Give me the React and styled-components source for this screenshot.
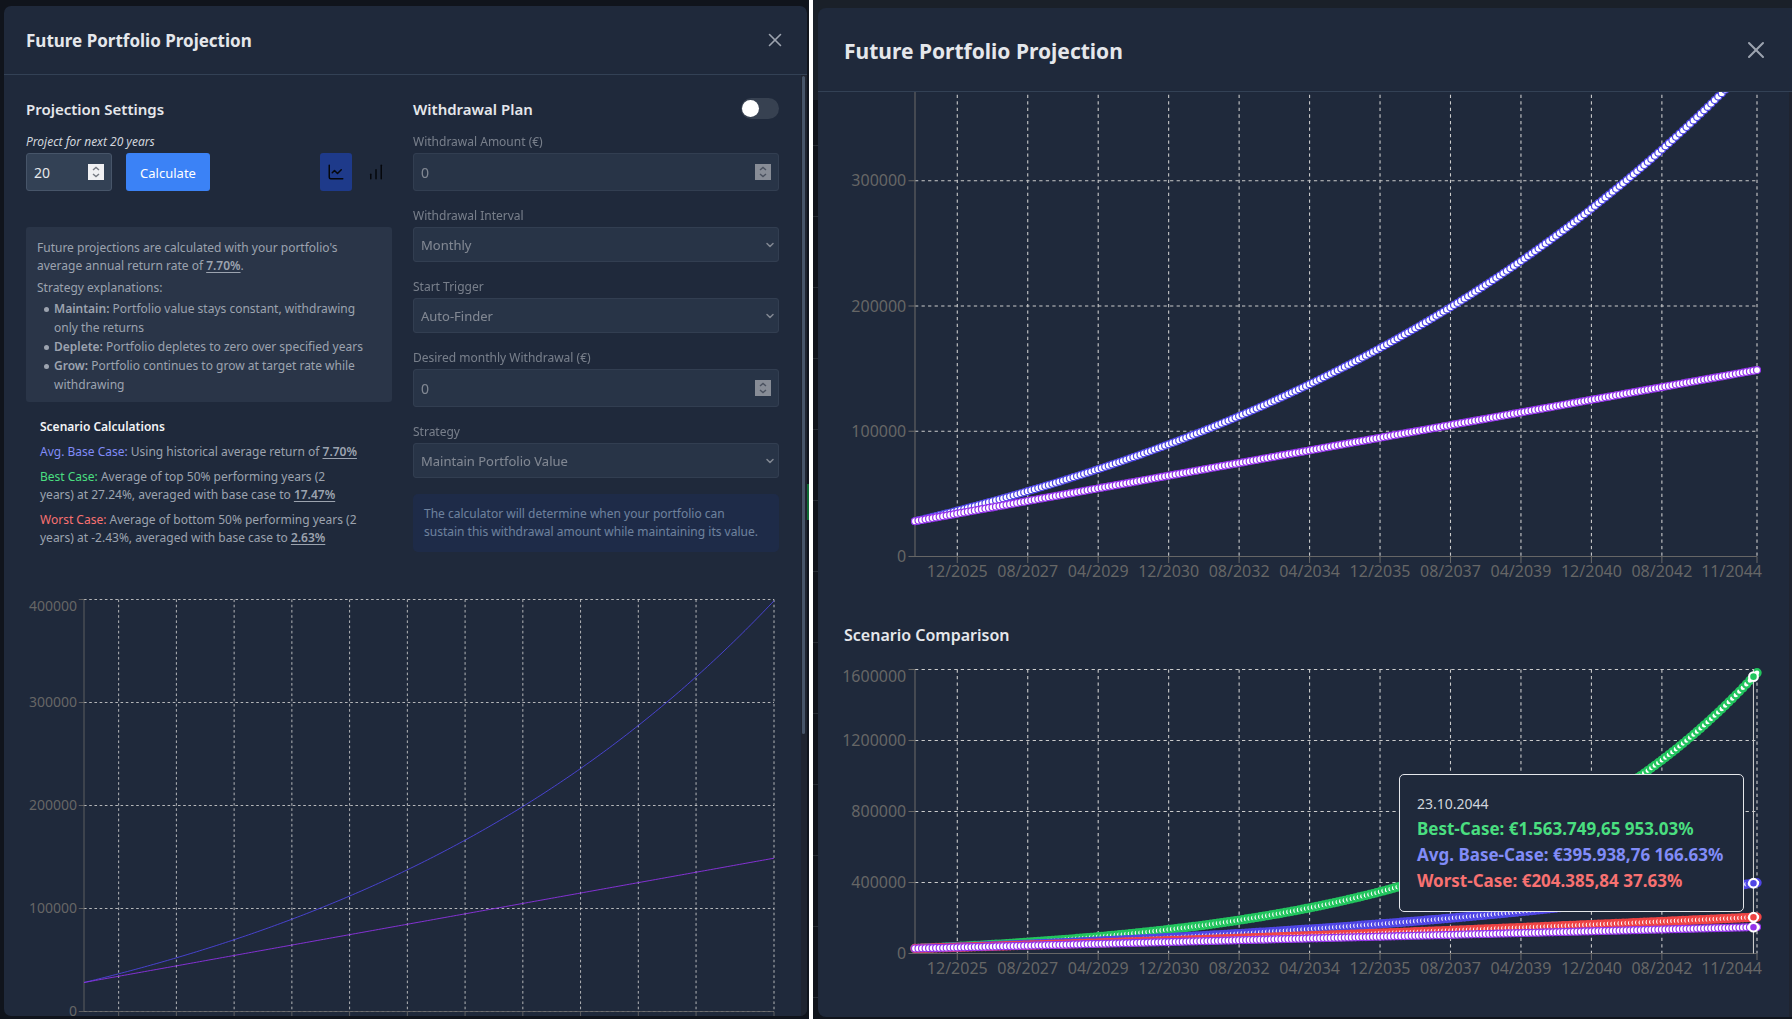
import React, { useId, useLayoutEffect, useRef, useState } from "react";
import styled, { createGlobalStyle } from "styled-components";
import { X, ChartLine, ChartNoAxesColumnIncreasing, ChevronDown } from "lucide-react";

const GlobalStyle = createGlobalStyle`
  * { box-sizing: border-box; }
  body {
    margin: 0;
    background: #ffffff;
    color: #e5e7eb;
    font-family: "Noto Sans", "Open Sans", sans-serif;
  }
  h2, h3, h4, p, ul { margin: 0; padding: 0; }
  button, input, select { font: inherit; }
`;

/* ---------- data ---------- */

const MONTHS = 240;
const START_VALUE = 28150;
const MONTHLY_PAYMENT = 505;

function project(annualRate) {
  const rate = Math.pow(1 + annualRate, 1 / 12) - 1;
  const values = [];
  let value = START_VALUE;
  for (let month = 0; month < MONTHS; month += 1) {
    values.push(value);
    value = value * (1 + rate) + MONTHLY_PAYMENT;
  }
  return values;
}

const invested = { name: "Invested", color: "#9333ea", width: 1, values: project(0) };
const base = { name: "Base", color: "#4f46e5", width: 1, values: project(0.077) };
const baseWide = { ...base, width: 2 };
const best = { name: "Best", color: "#22c55e", width: 2, values: project(0.1747) };
const worst = { name: "Worst", color: "#ef4444", width: 2, values: project(0.0263) };

const portfolioTicks = [0, 100000, 200000, 300000, 400000];
const scenarioTicks = [0, 400000, 800000, 1200000, 1600000];
const dateTicks = [
  [12, "12/2025"],
  [32, "08/2027"],
  [52, "04/2029"],
  [72, "12/2030"],
  [92, "08/2032"],
  [112, "04/2034"],
  [132, "12/2035"],
  [152, "08/2037"],
  [172, "04/2039"],
  [192, "12/2040"],
  [212, "08/2042"],
  [239, "11/2044"],
];

/* ---------- page and dialogs ---------- */

const Page = styled.main`
  display: grid;
  grid-template-columns: 809fr 979fr;
  gap: 4px;
  height: 100vh;
  overflow: hidden;
`;

const Screen = styled.section`
  display: grid;
  min-width: 0;
  min-height: 0;
  overflow: hidden;
  padding: ${(p) => p.$inset};
  background: ${(p) => p.$backdrop};
`;

const Dialog = styled.div`
  display: flex;
  flex-direction: column;
  min-width: 0;
  min-height: 0;
  overflow: hidden;
  border-radius: ${(p) => p.$radius};
  background: #1f293b;
`;

const DialogHeader = styled.header`
  flex: none;
  display: flex;
  align-items: center;
  justify-content: space-between;
  height: ${(p) => (p.$large ? 84 : 69)}px;
  padding: ${(p) => (p.$large ? "0 22px 0 26px" : "0 21px 0 22px")};
  border-bottom: 1px solid #334155;
`;

const DialogTitle = styled.h2`
  padding-top: 2px;
  font-size: ${(p) => (p.$large ? 21 : 17)}px;
  line-height: 28px;
  font-weight: 700;
`;

const CloseButton = styled.button`
  display: flex;
  padding: 0;
  border: 0;
  background: none;
  color: #9ca3af;
  cursor: pointer;
`;

const DialogBody = styled.div`
  flex: 1;
  display: flex;
  min-height: 0;
`;

const Content = styled.div`
  flex: 1;
  display: flex;
  flex-direction: column;
  justify-content: ${(p) => (p.$atEnd ? "flex-end" : "flex-start")};
  min-width: 0;
  overflow: hidden;
  padding: ${(p) => (p.$atEnd ? "0 27px 27px 26px" : "22px 22px 0")};
`;

const ScrollTrack = styled.div`
  flex: none;
  width: ${(p) => p.$width}px;
  padding: 1px 2px 0 1px;
  background: #1f2430;
`;

const ScrollThumb = styled.div`
  height: 70%;
  border-radius: 2px;
  background: #475569;
`;

/* ---------- settings ---------- */

const Columns = styled.div`
  flex: none;
  display: grid;
  grid-template-columns: 1fr 1fr;
  gap: 21px;
  margin-bottom: 42px;
`;

const Column = styled.div`
  display: flex;
  flex-direction: column;
  min-width: 0;
`;

const ColumnHead = styled.div`
  display: flex;
  align-items: center;
  justify-content: space-between;
  height: 24px;
  margin-bottom: 12px;
`;

const SectionTitle = styled.h3`
  font-size: 15px;
  line-height: 24px;
  font-weight: 600;
`;

const Label = styled.label`
  display: block;
  margin-bottom: 2px;
  font-size: 12px;
  line-height: 18px;
  font-style: ${(p) => (p.$italic ? "italic" : "normal")};
  color: #d1d5db;
`;

const Controls = styled.div`
  display: flex;
  align-items: stretch;
  gap: 14px;
  height: 38px;
  margin-bottom: 36px;
`;

const NumberBox = styled.div`
  display: flex;
  align-items: center;
  width: ${(p) => p.$width || "100%"};
  height: 38px;
  padding: 0 7px;
  border: 1px solid #475569;
  border-radius: 3px;
  background: #334155;
`;

const NumberInput = styled.input`
  flex: 1;
  min-width: 0;
  padding: 1px 0 0;
  border: 0;
  outline: 0;
  background: none;
  color: #e5e7eb;
  font-size: 14px;
  line-height: 20px;
  appearance: textfield;
  &::-webkit-inner-spin-button { display: none; }
`;

const Stepper = styled.svg`
  flex: none;
  width: 16px;
  height: 16px;
  background: #f0f0f3;
`;

const PrimaryButton = styled.button`
  width: 84px;
  padding: 1px 0 0;
  border: 0;
  border-radius: 3px;
  background: #3b82f6;
  color: #ffffff;
  font-size: 13px;
  cursor: pointer;
`;

const ViewSwitch = styled.div`
  display: flex;
  gap: 8px;
  margin-left: auto;
`;

const ViewButton = styled.button`
  display: flex;
  align-items: center;
  justify-content: center;
  width: 32px;
  padding: 0;
  border: 0;
  border-radius: 3px;
  background: ${(p) => (p.$active ? "#1e3a8a" : "transparent")};
  color: #05070c;
  cursor: pointer;
`;

const Notes = styled.div`
  padding: 12px 16px 8px 11px;
  border-radius: 3px;
  background: #2a3548;
  color: #9ca3af;
  font-size: 12px;
  line-height: 18px;

  p + p { margin-top: 4px; }
`;

const NoteList = styled.ul`
  && {
    margin-top: 2px;
    padding-left: 7px;
  }
  list-style: none;
  line-height: 19px;
`;

const NoteItem = styled.li`
  display: flex;
  gap: 5px;

  &::before {
    content: "";
    flex: none;
    width: 5px;
    height: 5px;
    margin-top: 8px;
    border-radius: 50%;
    background: #9ca3af;
  }
`;

const Rate = styled.span`
  font-weight: 600;
  text-decoration: underline;
  text-underline-offset: 2px;
`;

const Strong = styled.strong`
  font-weight: 600;
`;

const Scenarios = styled.div`
  display: flex;
  flex-direction: column;
  gap: 7px;
  padding: 16px 8px 0 14px;
  color: #9ca3af;
  font-size: 12px;
  line-height: 18px;
`;

const ScenarioTitle = styled.h4`
  color: #f3f4f6;
  font-size: 12px;
  line-height: 18px;
  font-weight: 600;
`;

const CaseName = styled.span`
  color: ${(p) => p.$color};
`;

const Toggle = styled.input`
  appearance: none;
  display: flex;
  align-items: center;
  width: 38px;
  height: 21px;
  margin: 0 0 2px;
  padding: 0 1px;
  border-radius: 11px;
  background: #374151;
  cursor: pointer;

  &::before {
    content: "";
    width: 17px;
    height: 17px;
    border-radius: 50%;
    background: #ffffff;
  }
`;

const Fields = styled.div`
  display: flex;
  flex-direction: column;
  gap: 16px;
  opacity: 0.5;
`;

const SelectBox = styled.div`
  display: grid;
  align-items: center;

  > * { grid-area: 1 / 1; }
  > svg { justify-self: end; margin-right: 3px; pointer-events: none; }
`;

const Select = styled.select`
  appearance: none;
  width: 100%;
  height: 35px;
  padding: 0 24px 0 7px;
  border: 1px solid #475569;
  border-radius: 3px;
  background: #334155;
  color: #e5e7eb;
  opacity: 1;
  font-size: 13px;
`;

const Hint = styled.p`
  && { padding: 11px; }
  border-radius: 5px;
  background: #1e2e57;
  color: #bfdbfe;
  font-size: 12px;
  line-height: 18px;
`;

function NumberField({ id, value, width, disabled }) {
  return (
    <NumberBox $width={width}>
      <NumberInput id={id} type="number" defaultValue={value} disabled={disabled} />
      <Stepper viewBox="0 0 16 16" fill="none" stroke="#777b84" strokeWidth="1.4" aria-hidden="true">
        <path d="M5 6 8 3.4 11 6M5 10 8 12.6 11 10" />
      </Stepper>
    </NumberBox>
  );
}

function LabeledNumber({ label, value }) {
  const id = useId();
  return (
    <div>
      <Label htmlFor={id}>{label}</Label>
      <NumberField id={id} value={value} disabled />
    </div>
  );
}

function LabeledSelect({ label, option }) {
  const id = useId();
  return (
    <div>
      <Label htmlFor={id}>{label}</Label>
      <SelectBox>
        <Select id={id} disabled>
          <option>{option}</option>
        </Select>
        <ChevronDown size={12} strokeWidth={3} color="#e5e7eb" />
      </SelectBox>
    </div>
  );
}

/* ---------- charts ---------- */

const ChartFrame = styled.div`
  flex: none;
  position: relative;
  min-width: 0;
`;

const ChartSvg = styled.svg`
  display: block;
  overflow: visible;

  text {
    fill: #666666;
    font-size: ${(p) => p.$fontSize}px;
  }
`;

const ChartTitle = styled.h3`
  flex: none;
  margin: 29px 0 16px;
  font-size: 16px;
  line-height: 26px;
  font-weight: 600;
`;

const Tooltip = styled.div`
  position: absolute;
  top: 110px;
  right: 18px;
  width: 345px;
  padding: 17px 0 17px 17px;
  border: 1px solid #e5e7eb;
  border-radius: 5px;
  background: #1f293b;
  white-space: nowrap;
`;

const TooltipDate = styled.p`
  color: #d1d5db;
  font-size: 14px;
  line-height: 24px;
`;

const TooltipRow = styled.p`
  color: ${(p) => p.$color};
  font-size: 17px;
  line-height: 26px;
  font-weight: 700;
`;

function Chart({ series, ticks, plotHeight, left, right, fontSize, scale, dots, activeIndex, children }) {
  const frame = useRef(null);
  const [width, setWidth] = useState(0);

  useLayoutEffect(() => {
    const measure = () => setWidth(frame.current.clientWidth);
    measure();
    const observer = new ResizeObserver(measure);
    observer.observe(frame.current);
    return () => observer.disconnect();
  }, []);

  const top = 5.5;
  const bottom = top + plotHeight;
  const height = Math.round(bottom + 36.5);
  const plotWidth = Math.max(0, width - left - right);
  const max = ticks[ticks.length - 1];
  const x = (index) => left + (index / (MONTHS - 1)) * plotWidth;
  const y = (value) => bottom - (value / max) * plotHeight;
  const labelHalf = fontSize * 1.9;

  return (
    <ChartFrame ref={frame} style={{ height }}>
      <ChartSvg
        width={width}
        height={height}
        $fontSize={fontSize}
        strokeWidth={scale}
        role="img"
        aria-label="Projection chart"
      >
        <g stroke="#cccccc" strokeDasharray={`${3 * scale} ${3 * scale}`}>
          {ticks.map((t) => (
            <line key={t} x1={left} x2={left + plotWidth} y1={y(t)} y2={y(t)} />
          ))}
          {dateTicks.map(([i]) => (
            <line key={i} x1={x(i)} x2={x(i)} y1={top} y2={bottom} />
          ))}
        </g>
        <g stroke="#666666">
          <path d={`M${left} ${top}V${bottom}H${left + plotWidth}`} fill="none" />
          {ticks.map((t) => (
            <line key={t} x1={left - 6 * scale} x2={left} y1={y(t)} y2={y(t)} />
          ))}
          {dateTicks.map(([i]) => (
            <line key={i} x1={x(i)} x2={x(i)} y1={bottom} y2={bottom + 6 * scale} />
          ))}
        </g>
        <g strokeWidth="0">
          {ticks.map((t) => (
            <text key={t} x={left - 8 * scale} y={Math.max(y(t), 12.5)} dy="0.355em" textAnchor="end">
              {t}
            </text>
          ))}
          {dateTicks.map(([i, label]) => (
            <text
              key={i}
              x={x(i) + labelHalf > width ? width : x(i)}
              y={bottom + 15}
              dy="0.355em"
              textAnchor={x(i) + labelHalf > width ? "end" : "middle"}
            >
              {label}
            </text>
          ))}
        </g>
        {series.map((s) => (
          <g key={s.name} stroke={s.color} strokeWidth={s.width * scale}>
            <polyline points={s.values.map((v, i) => `${x(i)},${y(v)}`).join(" ")} fill="none" />
            {dots &&
              s.values.map((v, i) => (
                <circle key={i} cx={x(i)} cy={y(v)} r="3.5" strokeWidth={s.width * 1.2} fill="#ffffff" />
              ))}
          </g>
        ))}
        {activeIndex !== undefined && (
          <g strokeWidth={2 * scale}>
            <line
              x1={x(activeIndex)}
              x2={x(activeIndex)}
              y1={top}
              y2={bottom}
              stroke="#cccccc"
              strokeWidth={scale}
            />
            {series.map((s) => (
              <circle
                key={s.name}
                cx={x(activeIndex)}
                cy={y(s.values[activeIndex])}
                r={4 * scale}
                fill={s.color}
                stroke="#ffffff"
              />
            ))}
          </g>
        )}
      </ChartSvg>
      {children}
    </ChartFrame>
  );
}

/* ---------- screens ---------- */

function ProjectionSettings() {
  return (
    <Column>
      <ColumnHead>
        <SectionTitle>Projection Settings</SectionTitle>
      </ColumnHead>
      <Label htmlFor="years" $italic>
        Project for next 20 years
      </Label>
      <Controls>
        <NumberField id="years" value={20} width="86px" />
        <PrimaryButton type="button">Calculate</PrimaryButton>
        <ViewSwitch>
          <ViewButton type="button" $active aria-label="Line chart">
            <ChartLine size={18} />
          </ViewButton>
          <ViewButton type="button" aria-label="Bar chart">
            <ChartNoAxesColumnIncreasing size={18} />
          </ViewButton>
        </ViewSwitch>
      </Controls>
      <Notes>
        <p>
          Future projections are calculated with your portfolio's average annual return rate of <Rate>7.70%</Rate>.
        </p>
        <p>Strategy explanations:</p>
        <NoteList>
          <NoteItem>
            <span>
              <Strong>Maintain:</Strong> Portfolio value stays constant, withdrawing only the returns
            </span>
          </NoteItem>
          <NoteItem>
            <span>
              <Strong>Deplete:</Strong> Portfolio depletes to zero over specified years
            </span>
          </NoteItem>
          <NoteItem>
            <span>
              <Strong>Grow:</Strong> Portfolio continues to grow at target rate while withdrawing
            </span>
          </NoteItem>
        </NoteList>
      </Notes>
      <Scenarios>
        <ScenarioTitle>Scenario Calculations</ScenarioTitle>
        <p>
          <CaseName $color="#818cf8">Avg. Base Case:</CaseName> Using historical average return of <Rate>7.70%</Rate>
        </p>
        <p>
          <CaseName $color="#4ade80">Best Case:</CaseName> Average of top 50% performing years (2
          <br />
          years) at 27.24%, averaged with base case to <Rate>17.47%</Rate>
        </p>
        <p>
          <CaseName $color="#f87171">Worst Case:</CaseName> Average of bottom 50% performing years (2
          <br />
          years) at -2.43%, averaged with base case to <Rate>2.63%</Rate>
        </p>
      </Scenarios>
    </Column>
  );
}

function WithdrawalPlan() {
  return (
    <Column>
      <ColumnHead>
        <SectionTitle id="withdrawal-plan">Withdrawal Plan</SectionTitle>
        <Toggle type="checkbox" role="switch" aria-labelledby="withdrawal-plan" />
      </ColumnHead>
      <Fields>
        <LabeledNumber label="Withdrawal Amount (€)" value={0} />
        <LabeledSelect label="Withdrawal Interval" option="Monthly" />
        <LabeledSelect label="Start Trigger" option="Auto-Finder" />
        <LabeledNumber label="Desired monthly Withdrawal (€)" value={0} />
        <LabeledSelect label="Strategy" option="Maintain Portfolio Value" />
        <Hint>
          The calculator will determine when your portfolio can sustain this withdrawal amount while maintaining its
          value.
        </Hint>
      </Fields>
    </Column>
  );
}

export default function App() {
  return (
    <Page>
      <GlobalStyle />
      <Screen
        $inset="6px 2px 3px 4px"
        $backdrop="linear-gradient(#0f6b35, #0f6b35) right 484px / 2px 36px no-repeat, #10141c"
      >
        <Dialog $radius="7px">
          <DialogHeader>
            <DialogTitle>Future Portfolio Projection</DialogTitle>
            <CloseButton type="button" aria-label="Close">
              <X size={22} strokeWidth={1.75} />
            </CloseButton>
          </DialogHeader>
          <DialogBody>
            <Content>
              <Columns>
                <ProjectionSettings />
                <WithdrawalPlan />
              </Columns>
              <Chart
                series={[base, invested]}
                ticks={portfolioTicks}
                plotHeight={412}
                left={58}
                right={5}
                fontSize={14}
                scale={0.87}
              />
            </Content>
            <ScrollTrack $width={6}>
              <ScrollThumb />
            </ScrollTrack>
          </DialogBody>
        </Dialog>
      </Screen>

      <Screen
        $inset="8px 0 2px 5px"
        $backdrop="linear-gradient(#1a2029 100px, transparent 100px), repeating-linear-gradient(#10141c 0 3px, #262b33 3px 4px, #10141c 4px 71px)"
      >
        <Dialog $radius="8px 0 0 8px">
          <DialogHeader $large>
            <DialogTitle $large>Future Portfolio Projection</DialogTitle>
            <CloseButton type="button" aria-label="Close">
              <X size={28} strokeWidth={1.75} />
            </CloseButton>
          </DialogHeader>
          <DialogBody>
            <Content $atEnd>
              <Chart
                series={[base, invested]}
                ticks={portfolioTicks}
                plotHeight={501}
                left={71}
                right={5}
                fontSize={16}
                scale={1.09}
                dots
              />
              <ChartTitle>Scenario Comparison</ChartTitle>
              <Chart
                series={[best, baseWide, worst, invested]}
                ticks={scenarioTicks}
                plotHeight={284}
                left={71}
                right={5}
                fontSize={16}
                scale={1.09}
                dots
                activeIndex={238}
              >
                <Tooltip role="tooltip">
                  <TooltipDate>23.10.2044</TooltipDate>
                  <TooltipRow $color="#4ade80">Best-Case: €1.563.749,65 953.03%</TooltipRow>
                  <TooltipRow $color="#818cf8">Avg. Base-Case: €395.938,76 166.63%</TooltipRow>
                  <TooltipRow $color="#f87171">Worst-Case: €204.385,84 37.63%</TooltipRow>
                </Tooltip>
              </Chart>
            </Content>
            <ScrollTrack $width={2} />
          </DialogBody>
        </Dialog>
      </Screen>
    </Page>
  );
}
